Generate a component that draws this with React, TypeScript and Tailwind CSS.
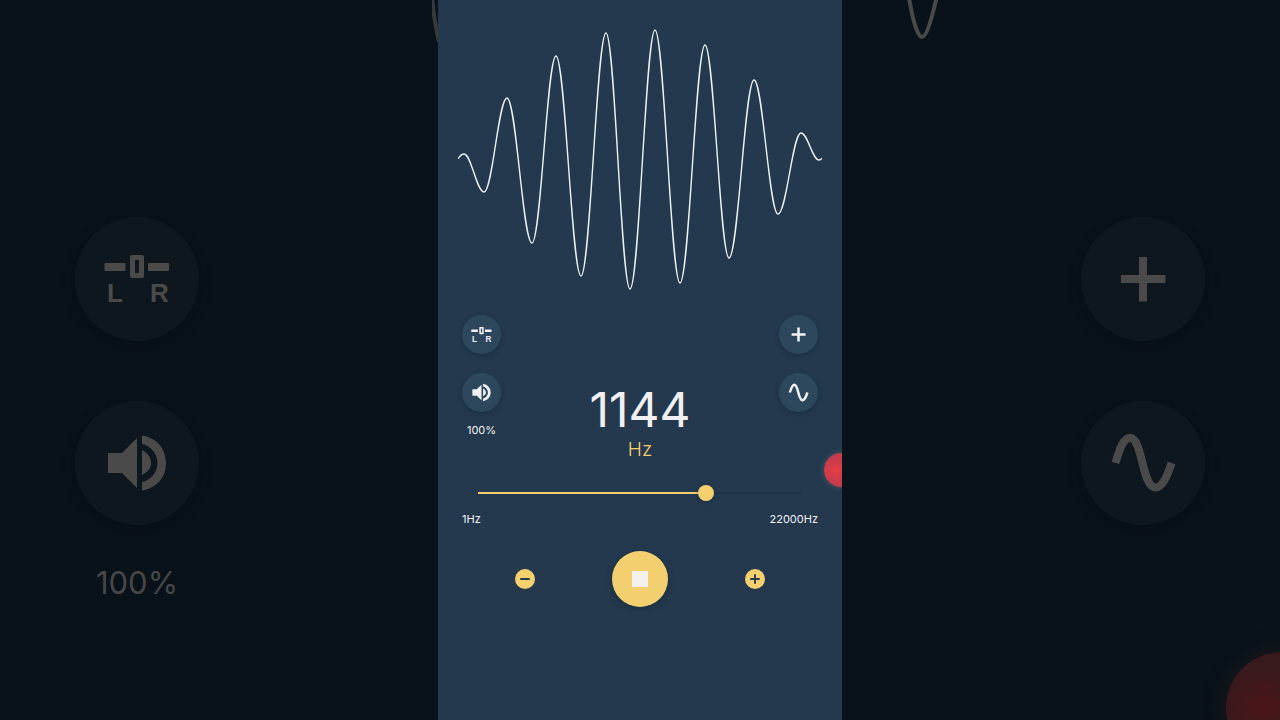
import React, { useState } from 'react';

const MAX_HZ = 22000;

// Turning points of the wave: peaks and valleys in drawing order
const WAVE_POINTS = [
  [6, 154], [26, 192], [49, 98], [74, 243], [98, 56], [123, 276], [148, 33],
  [172, 289], [197, 30], [222, 283], [247, 45], [271, 258], [296, 80],
  [320, 214], [343, 133], [361, 160],
];

function wavePath() {
  let d = 'M0 159 Q3 154 6 154';
  for (let i = 1; i < WAVE_POINTS.length; i++) {
    const [x0, y0] = WAVE_POINTS[i - 1];
    const [x1, y1] = WAVE_POINTS[i];
    const c = (x1 - x0) * 0.37;
    d += ` C${x0 + c} ${y0} ${x1 - c} ${y1} ${x1} ${y1}`;
  }
  return d + ' Q363 160 364 158';
}

type IconName = 'balance' | 'volume' | 'plus' | 'sine';

function Icon({ name }: { name: IconName }) {
  return (
    <svg viewBox="0 0 124 124" className="w-full h-full" fill="currentColor" aria-hidden="true">
      {name === 'balance' && (
        <>
          <rect x="29.5" y="46" width="21" height="8" rx="1" />
          <rect x="73" y="46" width="21" height="8" rx="1" />
          <path fillRule="evenodd" d="M57 38h10a2 2 0 0 1 2 2v19a2 2 0 0 1-2 2H57a2 2 0 0 1-2-2V40a2 2 0 0 1 2-2zM60 43v13h4V43z" />
          <text x="32" y="85" className="font-['Liberation_Sans',sans-serif] font-bold text-[26px]">L</text>
          <text x="75" y="85" className="font-['Liberation_Sans',sans-serif] font-bold text-[26px]">R</text>
        </>
      )}
      {name === 'volume' && (
        <>
          <path d="M33 52H47L62 37V87L47 72H33z" />
          <path d="M67 49C73 52 76 57 76 62S73 71 67 74z" />
          <path d="M67 34.5C82 37 91 48 91 62S82 87 67 89.5V81C76 79 82.5 71 82.5 62S76 45 67 43z" />
        </>
      )}
      {name === 'plus' && <path d="M58 40h8v18h18.500v8H66v18.500h-8V66H40v-8h18z" />}
      {name === 'sine' && (
        <path
          d="M34.500 62C39 46 43 37 49 37C62 37 60.500 86.500 74.500 86.500C81 86.500 86 76 90.500 62"
          fill="none"
          stroke="currentColor"
          strokeWidth="8"
        />
      )}
    </svg>
  );
}

function RoundButton({ name, label }: { name: IconName; label: string }) {
  return (
    <button type="button" aria-label={label} className="size-[39px] shrink-0 rounded-full bg-[#2d475d] text-[#f1f0f3] shadow-[0_2px_5px_rgba(15,30,45,0.3)]">
      <Icon name={name} />
    </button>
  );
}

function BackdropCircle({ name }: { name: IconName }) {
  return (
    <div className="size-[124px] shrink-0 rounded-full bg-[#0e171e] text-[#4b4a4b] shadow-[0_4px_14px_rgba(2,8,14,0.2)]">
      <Icon name={name} />
    </div>
  );
}

export default function App() {
  const [hz, setHz] = useState(1144);
  const [playing, setPlaying] = useState(true);

  // The slider runs on a logarithmic scale
  const position = (Math.log(hz) / Math.log(MAX_HZ)) * 100;
  const step = (amount: number) => setHz(Math.min(MAX_HZ, Math.max(1, hz + amount)));

  return (
    <div className="grid grid-cols-[438fr_404fr_438fr] min-h-screen overflow-hidden bg-[#091119] font-['Inter',sans-serif]">
      <aside aria-hidden="true" className="relative flex flex-col items-start pt-[217px] pl-[75px] overflow-hidden">
        <svg viewBox="0 0 6 42" className="absolute right-0 top-0 w-[6px] h-[42px]" fill="none" stroke="#38393b" strokeWidth="4">
          <path d="M0 -4C1 12 3 24 7 42" />
        </svg>
        <div className="flex flex-col items-center">
          <BackdropCircle name="balance" />
          <div className="mt-[60px]">
            <BackdropCircle name="volume" />
          </div>
          <span className="mt-10 text-[31px] leading-9 text-[#464748]">100%</span>
        </div>
      </aside>

      <main className="relative flex flex-col overflow-hidden bg-[#24394e] text-[#f1f0f3]">
        <svg viewBox="0 0 364 300" className="mx-5 h-[300px]" fill="none" stroke="#eef3f6" strokeWidth="1.4" role="img" aria-label="Sine wave">
          <path d={wavePath()} />
        </svg>

        <div className="flex justify-between px-6 pt-[15px]">
          <div className="flex flex-col items-center w-[39px]">
            <RoundButton name="balance" label="Balance" />
            <div className="mt-[19px]">
              <RoundButton name="volume" label="Volume" />
            </div>
            <span className="mt-1 text-[11px] leading-4">100%</span>
          </div>
          <div className="flex flex-col items-center pt-[67px]">
            <output htmlFor="frequency" className="text-[48px] leading-[56px]">{hz}</output>
            <span className="text-[19px] leading-6 font-light text-[#f3cf70]">Hz</span>
          </div>
          <div className="flex flex-col w-[39px] gap-[19px]">
            <RoundButton name="plus" label="Add" />
            <RoundButton name="sine" label="Waveform" />
          </div>
        </div>

        <div className="relative mx-10 mt-[21px] h-5">
          <div className="absolute inset-x-0 top-[9px] h-0.5 bg-[#213346]">
            <div className="h-full bg-[#f3cf70]" style={{ width: `${position}%` }} />
          </div>
          <input
            id="frequency"
            type="range"
            min="0"
            max="100"
            step="any"
            value={position}
            onChange={(e) => setHz(Math.round(Math.pow(MAX_HZ, Number(e.target.value) / 100)))}
            aria-label="Frequency"
            className="absolute -left-2 w-[calc(100%+16px)] h-5 appearance-none bg-transparent outline-none [&::-webkit-slider-thumb]:appearance-none [&::-webkit-slider-thumb]:size-4 [&::-webkit-slider-thumb]:rounded-full [&::-webkit-slider-thumb]:bg-[#f5d06f] [&::-webkit-slider-thumb]:shadow-[0_1px_4px_rgba(15,30,45,0.4)]"
          />
        </div>

        <div className="flex justify-between px-6 mt-2 text-[11px] leading-4">
          <span>1Hz</span>
          <span>{MAX_HZ}Hz</span>
        </div>

        <div className="flex items-center justify-center gap-[77px] mt-6">
          <button type="button" aria-label="Decrease frequency" onClick={() => step(-1)} className="size-5 rounded-full bg-[#f5d06f] text-[#24394e]">
            <svg viewBox="0 0 20 20" fill="none" stroke="currentColor" strokeWidth="1.9" strokeLinecap="round">
              <path d="M6 10h8" />
            </svg>
          </button>
          <button type="button" aria-label={playing ? 'Stop' : 'Play'} onClick={() => setPlaying(!playing)} className="flex items-center justify-center size-14 rounded-full bg-[#f3cf70] text-[#f4f0ef] shadow-[0_2px_6px_rgba(15,30,45,0.4)]">
            <svg viewBox="0 0 16 16" className="size-4" fill="currentColor">
              {playing ? <rect width="16" height="16" /> : <path d="M2 0l13 8-13 8z" />}
            </svg>
          </button>
          <button type="button" aria-label="Increase frequency" onClick={() => step(1)} className="size-5 rounded-full bg-[#f5d06f] text-[#24394e]">
            <svg viewBox="0 0 20 20" fill="none" stroke="currentColor" strokeWidth="1.9" strokeLinecap="round">
              <path d="M6 10h8M10 6v8" />
            </svg>
          </button>
        </div>

        {/* Record dot, half off the edge */}
        <div className="absolute -right-4 top-[453px] size-[34px] rounded-full bg-[radial-gradient(circle_at_12px_17px,#ee3e45_0,#d83c48_5px,#c33c4c_14px)] shadow-[0_0_4px_2px_rgba(80,95,108,0.45)]" />
      </main>

      <aside aria-hidden="true" className="relative flex flex-col items-end gap-[60px] pt-[217px] pr-[75px] overflow-hidden">
        <svg viewBox="0 0 36 44" className="absolute left-[62px] top-0 w-9 h-11" fill="none" stroke="#48494b" strokeWidth="4">
          <path d="M5 -2C9 22 14 37 18 37S27 22 33 -4" />
        </svg>
        <BackdropCircle name="plus" />
        <BackdropCircle name="sine" />
        <div className="absolute -right-[58px] top-[652px] size-28 rounded-full bg-[radial-gradient(circle_at_38px_56px,#4d1517_0,#43171a_16px,#38191c_40px)] shadow-[0_0_14px_8px_rgba(30,28,30,0.5)]" />
      </aside>
    </div>
  );
}
